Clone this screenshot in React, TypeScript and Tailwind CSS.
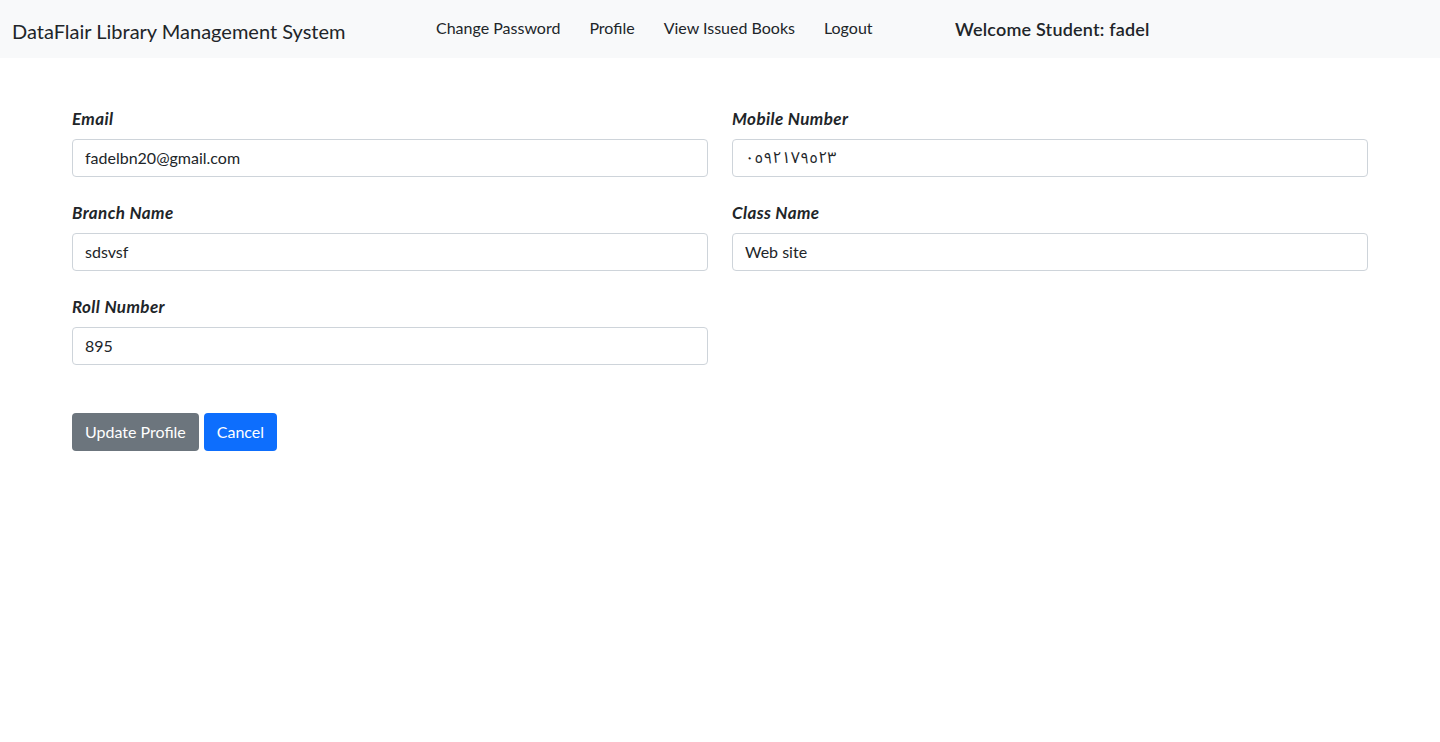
import React from 'react';

const font = { fontFamily: 'Lato, "Noto Sans", "Noto Sans Arabic", sans-serif' };

function Field({ label, value }: { label: string; value: string }) {
  return (
    <div className="mb-6">
      <label className="block mb-2 text-[17px] tracking-[0.4px] font-bold italic text-[#212529] leading-6">{label}</label>
      <input
        readOnly
        value={value}
        className="w-full h-[38px] px-3 pb-[1px] text-base text-[#212529] bg-white border border-[#ced4da] rounded-[4px] outline-none"
      />
    </div>
  );
}

export default function App() {
  return (
    <div className="min-h-screen bg-white text-[#212529]" style={font}>
      {/* Navbar */}
      <nav className="h-[58px] bg-[#f8f9fa] flex items-center px-3">
        <a className="text-xl text-[#212529] w-[424px] pt-[3px]">DataFlair Library Management System</a>
        <div className="flex items-center gap-[29px] text-base text-[#212529] w-[519px] pb-[2px]">
          <span>Change Password</span>
          <span>Profile</span>
          <span>View Issued Books</span>
          <span>Logout</span>
        </div>
        <span className="text-lg font-semibold tracking-[0.2px] text-[#212529]">Welcome Student: fadel</span>
      </nav>

      {/* Main */}
      <main className="max-w-[1320px] mx-auto px-3 pt-[49px]">
        <div className="grid grid-cols-2 gap-x-6">
          <Field label="Email" value="fadelbn20@gmail.com" />
          <Field label="Mobile Number" value="٠٥٩٢١٧٩٥٢٣" />
          <Field label="Branch Name" value="sdsvsf" />
          <Field label="Class Name" value="Web site" />
          <Field label="Roll Number" value="895" />
        </div>
        <div className="flex gap-[5px] mt-6">
          <button className="h-[38px] px-[13px] bg-[#6c757d] text-white text-base rounded-[4px]">Update Profile</button>
          <button className="h-[38px] px-[13px] bg-[#0d6efd] text-white text-base rounded-[4px]">Cancel</button>
        </div>
      </main>
    </div>
  );
}
